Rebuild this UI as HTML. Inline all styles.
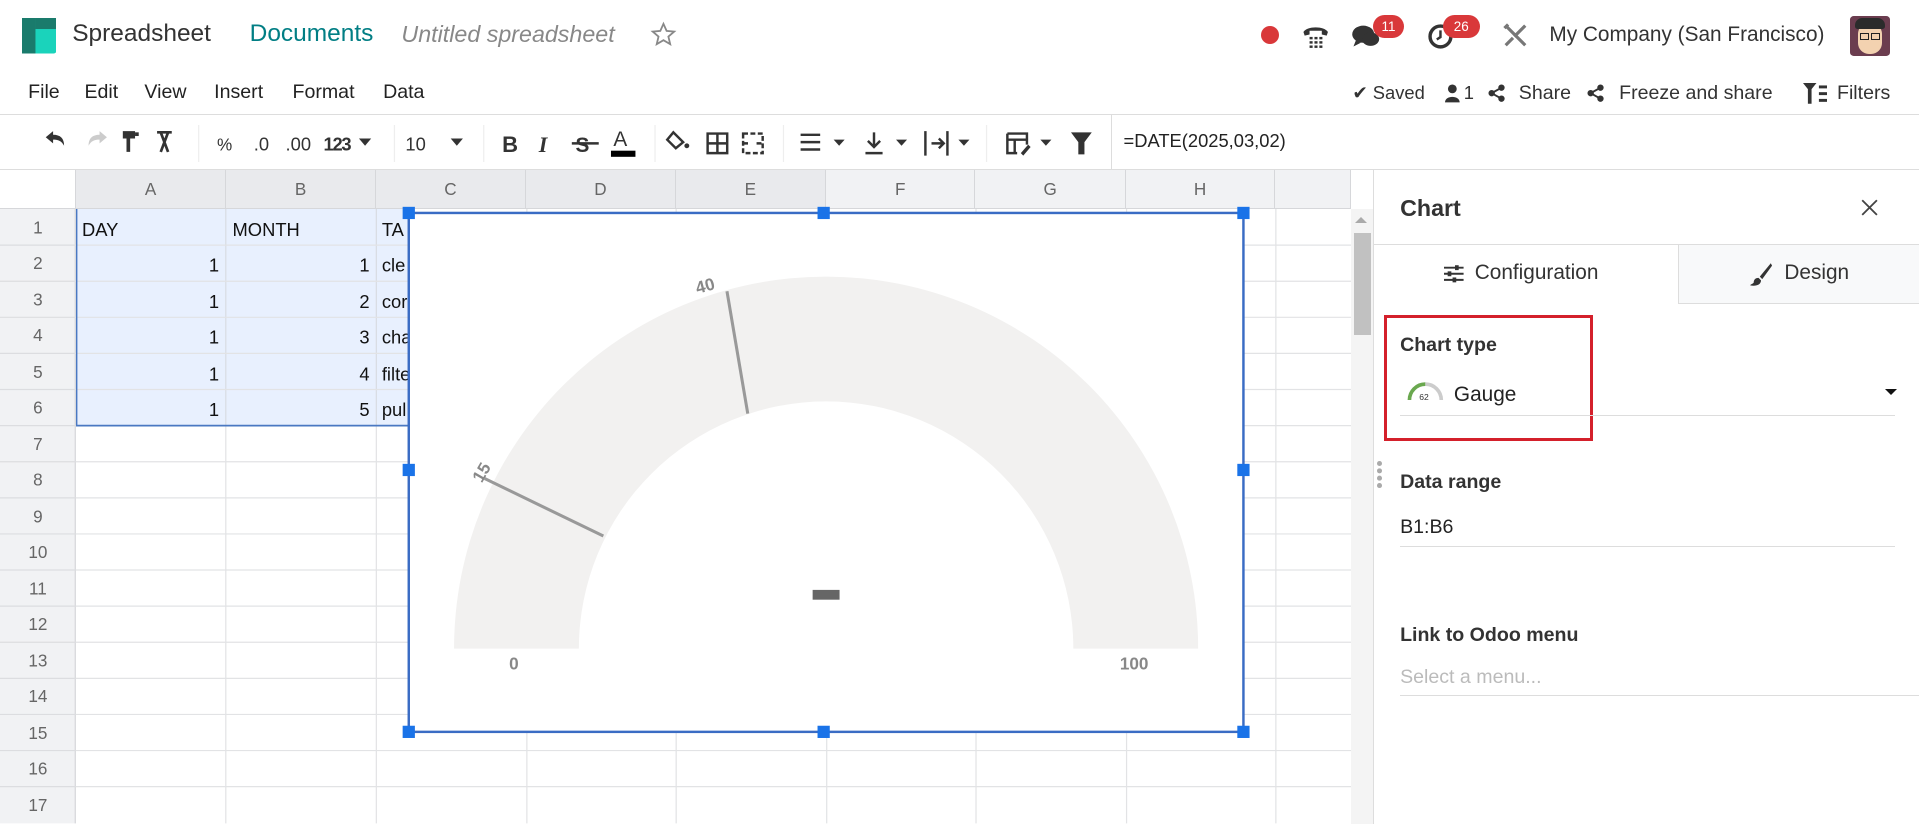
<!DOCTYPE html>
<html><head><meta charset="utf-8"><style>
*{box-sizing:border-box;margin:0;padding:0}
html,body{width:1919px;height:824px;overflow:hidden;background:#fff}
#r{zoom:1.22385;position:relative;width:1568px;height:673px;font-family:"Liberation Sans",sans-serif;color:#333}
.a{position:absolute;white-space:nowrap}
.ic{fill:#333}
.hd{background:#e9eaed;color:#666;font-size:14px;text-align:center;border-right:1px solid #d6d7da;border-bottom:1px solid #d6d7da}
.m{position:absolute;top:66px;font-size:16px;color:#222}
</style></head><body><div id="r">
<svg class="a" style="left:18px;top:15px" width="28" height="29"><rect x="0" y="0" width="28" height="29" rx="2" fill="#1ad3bb"/><rect x="0" y="0" width="11" height="29" fill="#1a7b6c"/><rect x="11" y="0" width="17" height="9" fill="#1a7b6c"/></svg>
<div class="a" style="left:59px;top:16px;font-size:20px;color:#333">Spreadsheet</div>
<div class="a" style="left:204px;top:16px;font-size:20px;color:#017e84">Documents</div>
<div class="a" style="left:328px;top:17px;font-size:19px;color:#888;font-style:italic">Untitled spreadsheet</div>
<svg class="a" style="left:531px;top:17px" width="22" height="22" viewBox="0 0 24 24"><path d="M12 2.5l2.8 6.3 6.8.6-5.2 4.5 1.6 6.7L12 17.1l-6 3.5 1.6-6.7L2.4 9.4l6.8-.6z" fill="none" stroke="#888" stroke-width="1.6"/></svg>
<div class="a" style="left:1030px;top:21px;width:15px;height:15px;border-radius:50%;background:#d9383a"></div>
<svg class="a" style="left:1063px;top:17px" width="24" height="24" viewBox="0 0 24 24"><path d="M2 9c3-5 17-5 20 0l-1 3-4-1V8H7v3l-4 1z" class="ic"/><g class="ic"><rect x="7" y="13" width="2.5" height="2"/><rect x="11" y="13" width="2.5" height="2"/><rect x="15" y="13" width="2.5" height="2"/><rect x="7" y="16.5" width="2.5" height="2"/><rect x="11" y="16.5" width="2.5" height="2"/><rect x="15" y="16.5" width="2.5" height="2"/><rect x="7" y="20" width="2.5" height="2"/><rect x="11" y="20" width="2.5" height="2"/><rect x="15" y="20" width="2.5" height="2"/></g></svg>
<svg class="a" style="left:1104px;top:18px" width="26" height="24" viewBox="0 0 26 24"><ellipse cx="10" cy="10" rx="9" ry="7" class="ic"/><path d="M4 15l-2 5 6-3z" class="ic"/><ellipse cx="16" cy="14" rx="7" ry="5.5" class="ic"/></svg>
<div class="a" style="left:1122px;top:12px;width:25px;height:19px;border-radius:10px;background:#d9383a;color:#fff;font-size:11px;text-align:center;line-height:19px">11</div>
<svg class="a" style="left:1166px;top:19px" width="22" height="22" viewBox="0 0 22 22"><circle cx="11" cy="11" r="8.5" fill="none" stroke="#333" stroke-width="2.8"/><path d="M11 6v5.5l-3 2" fill="none" stroke="#333" stroke-width="2"/></svg>
<div class="a" style="left:1179px;top:12px;width:30px;height:19px;border-radius:10px;background:#d9383a;color:#fff;font-size:11px;text-align:center;line-height:19px">26</div>
<svg class="a" style="left:1227px;top:18px" width="22" height="22" viewBox="0 0 22 22"><path d="M3 3l16 16M19 3L10 12M3 19l6-6M2 5l3-3" stroke="#777" stroke-width="2.6" fill="none"/></svg>
<div class="a" style="left:1266px;top:19px;font-size:17px;color:#333">My Company (San Francisco)</div>
<div class="a" style="left:1512px;top:13px;width:32px;height:33px;border-radius:3px;background:#6b3d4f;overflow:hidden"><div style="position:absolute;left:6px;top:6px;width:20px;height:25px;border-radius:9px;background:#f3d2b0"></div><div style="position:absolute;left:4px;top:2px;width:24px;height:9px;border-radius:6px 6px 2px 2px;background:#2b2b2b"></div><div style="position:absolute;left:8px;top:14px;width:7px;height:6px;border:1.5px solid #222"></div><div style="position:absolute;left:17px;top:14px;width:7px;height:6px;border:1.5px solid #222"></div></div>
<div class="m" style="left:23px">File</div><div class="m" style="left:69px">Edit</div><div class="m" style="left:118px">View</div><div class="m" style="left:175px">Insert</div><div class="m" style="left:239px">Format</div><div class="m" style="left:313px">Data</div>
<div class="a" style="left:1105px;top:67px;font-size:15px;color:#333">✔ Saved</div>
<svg class="a" style="left:1181px;top:69px" width="12" height="15" viewBox="0 0 12 15"><circle cx="6" cy="4" r="3.6" class="ic"/><path d="M0 15c0-6 12-6 12 0z" class="ic"/></svg>
<div class="a" style="left:1196px;top:67px;font-size:15px">1</div>
<svg class="a" style="left:1216px;top:69px" width="14" height="15" viewBox="0 0 14 15"><circle cx="11" cy="3" r="2.6" class="ic"/><circle cx="3" cy="7.5" r="2.6" class="ic"/><circle cx="11" cy="12" r="2.6" class="ic"/><path d="M11 3L3 7.5 11 12" stroke="#333" stroke-width="1.6" fill="none"/></svg>
<div class="a" style="left:1241px;top:67px;font-size:16px">Share</div>
<svg class="a" style="left:1297px;top:69px" width="14" height="15" viewBox="0 0 14 15"><circle cx="11" cy="3" r="2.6" class="ic"/><circle cx="3" cy="7.5" r="2.6" class="ic"/><circle cx="11" cy="12" r="2.6" class="ic"/><path d="M11 3L3 7.5 11 12" stroke="#333" stroke-width="1.6" fill="none"/></svg>
<div class="a" style="left:1323px;top:67px;font-size:16px">Freeze and share</div>
<svg class="a" style="left:1473px;top:68px" width="20" height="17" viewBox="0 0 20 17"><path d="M0 0h11L7 5v12H4V5z" class="ic"/><rect x="13" y="2" width="7" height="2.4" class="ic"/><rect x="13" y="7.5" width="7" height="2.4" class="ic"/><rect x="13" y="13" width="7" height="2.4" class="ic"/></svg>
<div class="a" style="left:1501px;top:67px;font-size:16px">Filters</div>
<div class="a" style="left:0;top:93px;width:1568px;height:1px;background:#ddd"></div>
<div class="a" style="left:0;top:138px;width:1568px;height:1px;background:#ddd"></div>
<div class="a" style="left:908px;top:93px;width:1px;height:45px;background:#ddd"></div>
<div class="a" style="left:918px;top:106px;font-size:15px;color:#222">=DATE(2025,03,02)</div>
<svg class="a" style="left:30px;top:102px" width="880" height="30" viewBox="0 0 880 30">
<g stroke="#eee"><line x1="132" y1="0" x2="132" y2="36"/><line x1="292" y1="0" x2="292" y2="36"/><line x1="365" y1="0" x2="365" y2="36"/><line x1="505" y1="0" x2="505" y2="36"/><line x1="610" y1="0" x2="610" y2="36"/><line x1="776" y1="0" x2="776" y2="36"/></g>
<path d="M7 10l6-5v3c6 0 9 3 9 9-2-4-5-5-9-5v3z" fill="#333"/>
<path d="M57 10l-6-5v3c-6 0-9 3-9 9 2-4 5-5 9-5v3z" fill="#ccc"/>
<path d="M70 5h10v6h-4v11h-3V11h-3z" fill="#333"/><rect x="80" y="6" width="3" height="3" fill="#333"/>
<path d="M98 6h12M101 6l6 16M107 6l-6 16" stroke="#333" stroke-width="2.2" fill="none"/>
<g font-family="Liberation Sans" fill="#333">
<text x="147" y="21" font-size="14">%</text>
<text x="177" y="21" font-size="15">.0</text>
<text x="203" y="21" font-size="15">.00</text>
<text x="234" y="21" font-size="15" font-weight="bold" letter-spacing="-1">123</text>
<text x="301" y="21" font-size="15">10</text>
<text x="380" y="22" font-size="18" font-weight="bold">B</text>
<text x="440" y="22" font-size="17" font-weight="bold">S</text>
<text x="471" y="17" font-size="17">A</text>
</g>
<path d="M263 11h10l-5 6z" fill="#333"/>
<path d="M338 11h10l-5 6z" fill="#333"/>
<text x="410" y="22" font-size="18" font-weight="bold" font-style="italic" fill="#333" font-family="Liberation Serif">I</text>
<line x1="437" y1="15" x2="459" y2="15" stroke="#333" stroke-width="2"/>
<rect x="469" y="21" width="20" height="5" fill="#000"/>
<path d="M520 6l8 8-6 5-7-7z" fill="none" stroke="#333" stroke-width="2"/><circle cx="531" cy="17" r="2" fill="#333"/>
<path d="M548 7h16v16h-16zM556 7v16M548 15h16" stroke="#333" stroke-width="2" fill="none"/>
<path d="M577 7h16v16h-16zM577 15h5M588 15h5" stroke="#333" stroke-width="2" fill="none" stroke-dasharray="4 2"/>
<path d="M624 8h16M624 14h16M624 20h16" stroke="#333" stroke-width="2"/><path d="M651 12h9l-4.5 5z" fill="#333"/>
<path d="M684 6v12M679 13l5 5 5-5M677 23h14" stroke="#333" stroke-width="2" fill="none"/><path d="M702 12h9l-4.5 5z" fill="#333"/>
<path d="M726 5v20M731 15h9M737 11l4 4-4 4M744 5v20" stroke="#333" stroke-width="2" fill="none"/><path d="M753 12h9l-4.5 5z" fill="#333"/>
<path d="M793 7h16v9M793 7v16h8M793 12h16M799 12v11" stroke="#333" stroke-width="2" fill="none"/><path d="M804 23l6-7 2 2-6 7z" fill="#333"/><path d="M820 12h9l-4.5 5z" fill="#333"/>
<path d="M845 6h17l-6 8v10h-5V14z" fill="#333"/>
</svg>
<div class="a" style="left:0;top:139px;width:62px;height:32px;background:#fff;border-right:1px solid #d6d7da;border-bottom:1px solid #d6d7da"></div>
<div class="a hd" style="left:62px;top:139px;width:123px;height:32px;line-height:32px">A</div>
<div class="a hd" style="left:185px;top:139px;width:122px;height:32px;line-height:32px">B</div>
<div class="a hd" style="left:307px;top:139px;width:123px;height:32px;line-height:32px">C</div>
<div class="a hd" style="left:430px;top:139px;width:122px;height:32px;line-height:32px">D</div>
<div class="a hd" style="left:552px;top:139px;width:123px;height:32px;line-height:32px">E</div>
<div class="a hd" style="left:675px;top:139px;width:122px;height:32px;line-height:32px;background:#f1f2f4">F</div>
<div class="a hd" style="left:797px;top:139px;width:123px;height:32px;line-height:32px;background:#f1f2f4">G</div>
<div class="a hd" style="left:920px;top:139px;width:122px;height:32px;line-height:32px;background:#f1f2f4">H</div>
<div class="a hd" style="left:1042px;top:139px;width:62px;height:32px;background:#f1f2f4"></div>
<svg class="a" style="left:0;top:171px" width="1104" height="502">
<g stroke="#e2e3e5" stroke-width="1">
<line x1="184.5" y1="0" x2="184.5" y2="502"/><line x1="307.5" y1="0" x2="307.5" y2="502"/><line x1="430.5" y1="0" x2="430.5" y2="502"/><line x1="552.5" y1="0" x2="552.5" y2="502"/><line x1="675.5" y1="0" x2="675.5" y2="502"/><line x1="797.5" y1="0" x2="797.5" y2="502"/><line x1="920.5" y1="0" x2="920.5" y2="502"/><line x1="1042.5" y1="0" x2="1042.5" y2="502"/>
</g>
<rect x="62" y="0" width="272" height="177" fill="#e8f0fe"/>
<g stroke="#d8dce3"><line x1="184.5" y1="0" x2="184.5" y2="177"/><line x1="307.5" y1="0" x2="307.5" y2="177"/></g>
<g stroke="#e2e3e5">
<line x1="62" y1="29.5" x2="1104" y2="29.5"/><line x1="62" y1="59" x2="1104" y2="59"/><line x1="62" y1="88.5" x2="1104" y2="88.5"/><line x1="62" y1="118" x2="1104" y2="118"/><line x1="62" y1="147.5" x2="1104" y2="147.5"/><line x1="62" y1="177" x2="1104" y2="177"/><line x1="62" y1="206.5" x2="1104" y2="206.5"/><line x1="62" y1="236" x2="1104" y2="236"/><line x1="62" y1="265.5" x2="1104" y2="265.5"/><line x1="62" y1="295" x2="1104" y2="295"/><line x1="62" y1="324.5" x2="1104" y2="324.5"/><line x1="62" y1="354" x2="1104" y2="354"/><line x1="62" y1="383.5" x2="1104" y2="383.5"/><line x1="62" y1="413" x2="1104" y2="413"/><line x1="62" y1="442.5" x2="1104" y2="442.5"/><line x1="62" y1="472" x2="1104" y2="472"/>
</g>
<path d="M62.5 0V177H334" stroke="#4a78c2" stroke-width="1.5" fill="none"/>
<rect x="0" y="0" width="62" height="502" fill="#f1f2f4"/>
<line x1="61.5" y1="0" x2="61.5" y2="502" stroke="#d6d7da"/>
<g stroke="#dcdde0"><line x1="0" y1="29.5" x2="62" y2="29.5"/><line x1="0" y1="59" x2="62" y2="59"/><line x1="0" y1="88.5" x2="62" y2="88.5"/><line x1="0" y1="118" x2="62" y2="118"/><line x1="0" y1="147.5" x2="62" y2="147.5"/><line x1="0" y1="177" x2="62" y2="177"/><line x1="0" y1="206.5" x2="62" y2="206.5"/><line x1="0" y1="236" x2="62" y2="236"/><line x1="0" y1="265.5" x2="62" y2="265.5"/><line x1="0" y1="295" x2="62" y2="295"/><line x1="0" y1="324.5" x2="62" y2="324.5"/><line x1="0" y1="354" x2="62" y2="354"/><line x1="0" y1="383.5" x2="62" y2="383.5"/><line x1="0" y1="413" x2="62" y2="413"/><line x1="0" y1="442.5" x2="62" y2="442.5"/><line x1="0" y1="472" x2="62" y2="472"/></g>
<g font-family="Liberation Sans" font-size="14" fill="#666" text-anchor="middle">
<text x="31" y="20">1</text><text x="31" y="49">2</text><text x="31" y="79">3</text><text x="31" y="108">4</text><text x="31" y="138">5</text><text x="31" y="167">6</text><text x="31" y="197">7</text><text x="31" y="226">8</text><text x="31" y="256">9</text><text x="31" y="285">10</text><text x="31" y="315">11</text><text x="31" y="344">12</text><text x="31" y="374">13</text><text x="31" y="403">14</text><text x="31" y="433">15</text><text x="31" y="462">16</text><text x="31" y="492">17</text>
</g>
<g font-family="Liberation Sans" font-size="15" fill="#111">
<text x="67" y="22">DAY</text><text x="190" y="22">MONTH</text><text x="312" y="22">TA</text>
<g text-anchor="end"><text x="179" y="51">1</text><text x="179" y="81">1</text><text x="179" y="110">1</text><text x="179" y="140">1</text><text x="179" y="169">1</text>
<text x="302" y="51">1</text><text x="302" y="81">2</text><text x="302" y="110">3</text><text x="302" y="140">4</text><text x="302" y="169">5</text></g>
<text x="312" y="51">cle</text><text x="312" y="81">cor</text><text x="312" y="110">cha</text><text x="312" y="140">filte</text><text x="312" y="169">pul</text>
</g>
</svg>
<svg class="a" style="left:0;top:0" width="1104" height="673">
<rect x="334" y="174" width="682" height="424" fill="#fff" stroke="#3a6cc4" stroke-width="2"/>
<path d="M371 530A304 304 0 0 1 979 530H877A202 202 0 0 0 473 530Z" fill="#f2f1f0"/>
<line x1="594" y1="238" x2="611" y2="338" stroke="#999" stroke-width="2.5"/>
<line x1="396" y1="391" x2="493" y2="438" stroke="#999" stroke-width="2.5"/>
<g font-family="Liberation Sans" font-size="14" fill="#888" font-weight="bold">
<text x="568" y="238" transform="rotate(-15 577 232)">40</text>
<text x="385" y="392" transform="rotate(-60 392 386)">15</text>
<text x="416" y="547">0</text><text x="915" y="547">100</text>
</g>
<rect x="664" y="482" width="22" height="8" fill="#666"/>
<g fill="#1a73e8"><rect x="329" y="169" width="10" height="10"/><rect x="668" y="169" width="10" height="10"/><rect x="1011" y="169" width="10" height="10"/><rect x="329" y="379" width="10" height="10"/><rect x="1011" y="379" width="10" height="10"/><rect x="329" y="593" width="10" height="10"/><rect x="668" y="593" width="10" height="10"/><rect x="1011" y="593" width="10" height="10"/></g>
</svg>
<div class="a" style="left:1104px;top:171px;width:18px;height:502px;background:#f4f4f4"></div>
<div class="a" style="left:1107px;top:177px;width:0;height:0;border:5px solid transparent;border-bottom-color:#aaa;border-top:0"></div>
<div class="a" style="left:1106px;top:190px;width:14px;height:84px;background:#c1c1c1"></div>
<div class="a" style="left:1122px;top:139px;width:1px;height:534px;background:#ddd"></div>
<div class="a" style="left:1144px;top:159px;font-size:19px;font-weight:bold;color:#333">Chart</div>
<svg class="a" style="left:1521px;top:163px" width="14" height="14"><path d="M1 1l12 12M13 1L1 13" stroke="#444" stroke-width="1.5"/></svg>
<div class="a" style="left:1123px;top:199px;width:445px;height:1px;background:#ddd"></div>
<div class="a" style="left:1371px;top:200px;width:197px;height:48px;background:#f8f9fa;border-left:1px solid #ddd;border-bottom:1px solid #ddd"></div>
<svg class="a" style="left:1180px;top:216px" width="16" height="15"><g stroke="#333" stroke-width="1.6"><line x1="0" y1="3" x2="16" y2="3"/><line x1="0" y1="8" x2="16" y2="8"/><line x1="0" y1="13" x2="16" y2="13"/></g><g fill="#333"><rect x="9" y="1" width="3" height="4"/><rect x="3" y="6" width="3" height="4"/><rect x="7" y="11" width="3" height="4"/></g></svg>
<div class="a" style="left:1205px;top:213px;font-size:17px;color:#333">Configuration</div>
<svg class="a" style="left:1430px;top:214px" width="18" height="20"><path d="M17 1L8 12l2 2L18 3z" fill="#333"/><path d="M7 13c-3 0-4 2-4 4-1 1-2 1-3 2 4 1 9 0 9-4z" fill="#333"/></svg>
<div class="a" style="left:1458px;top:213px;font-size:17px;color:#333">Design</div>
<div class="a" style="left:1131px;top:257px;width:171px;height:103px;border:3px solid #d4202b"></div>
<div class="a" style="left:1144px;top:273px;font-size:16px;font-weight:bold;color:#333">Chart type</div>
<svg class="a" style="left:1150px;top:309px" width="32" height="20"><path d="M2 18A13 13 0 0 1 15 5" stroke="#6aa84f" stroke-width="3" fill="none"/><path d="M15 5A13 13 0 0 1 28 18" stroke="#ccc" stroke-width="3" fill="none"/><text x="10" y="18" font-size="7" font-family="Liberation Sans" fill="#333">62</text></svg>
<div class="a" style="left:1188px;top:313px;font-size:17px;color:#222">Gauge</div>
<div class="a" style="left:1540px;top:318px;width:0;height:0;border:5px solid transparent;border-top:5px solid #111;border-bottom:0"></div>
<div class="a" style="left:1144px;top:339px;width:404px;height:1px;background:#ddd"></div>
<div class="a" style="left:1125px;top:377px;width:4px;height:4px;border-radius:50%;background:#aaa;box-shadow:0 6px 0 #aaa,0 12px 0 #aaa,0 18px 0 #aaa"></div>
<div class="a" style="left:1144px;top:385px;font-size:16px;font-weight:bold;color:#333">Data range</div>
<div class="a" style="left:1144px;top:422px;font-size:16px;color:#222">B1:B6</div>
<div class="a" style="left:1144px;top:446px;width:404px;height:1px;background:#ddd"></div>
<div class="a" style="left:1144px;top:510px;font-size:16px;font-weight:bold;color:#333">Link to Odoo menu</div>
<div class="a" style="left:1144px;top:544px;font-size:16px;color:#bbb">Select a menu...</div>
<div class="a" style="left:1144px;top:568px;width:424px;height:1px;background:#ddd"></div>
</div></body></html>
